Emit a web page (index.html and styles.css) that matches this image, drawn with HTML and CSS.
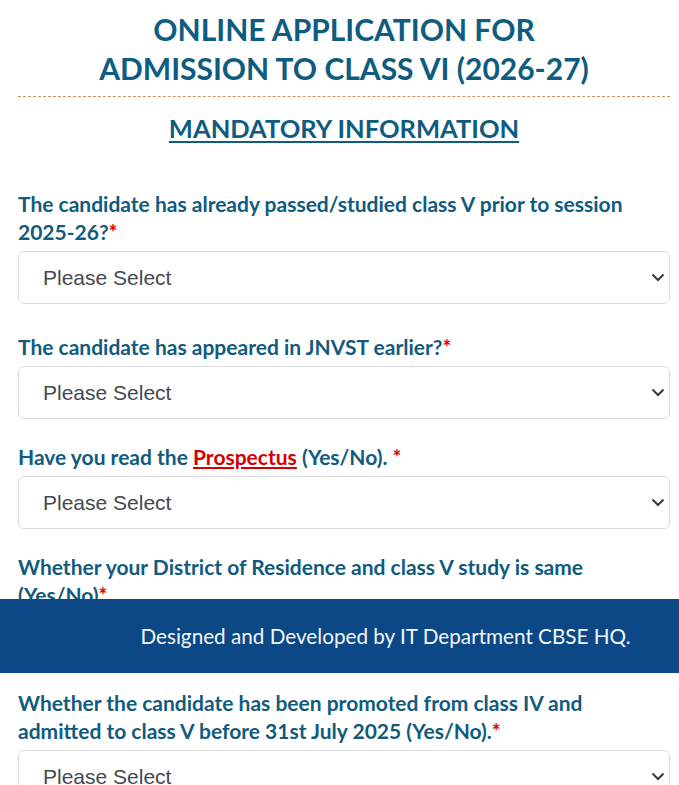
FILE: index.html
```html
<!DOCTYPE html>
<html lang="en">
<head>
<meta charset="utf-8">
<title>Online Application for Admission to Class VI (2026-27)</title>
<link rel="stylesheet" href="styles.css">
</head>
<body>
<div class="page">
  <h1 class="title">ONLINE APPLICATION FOR<br>ADMISSION TO CLASS VI (2026-27)</h1>
  <hr class="rule">
  <h2 class="subtitle">MANDATORY INFORMATION</h2>

  <form class="form">
    <div class="field field-first">
      <label class="label">The candidate has already passed/studied class V prior to session <span class="nw">2025-26?<span class="req">*</span></span></label>
      <div class="select-wrap">
        <select class="select"><option>Please Select</option><option>Yes</option><option>No</option></select>
        <svg class="chev" width="14" height="9" viewBox="0 0 14 9"><path d="M1.5 1.5 L7 7 L12.5 1.5" fill="none" stroke="#3a3a3a" stroke-width="2"/></svg>
      </div>
    </div>

    <div class="field">
      <label class="label">The candidate has appeared in JNVST earlier?<span class="req">*</span></label>
      <div class="select-wrap">
        <select class="select"><option>Please Select</option><option>Yes</option><option>No</option></select>
        <svg class="chev" width="14" height="9" viewBox="0 0 14 9"><path d="M1.5 1.5 L7 7 L12.5 1.5" fill="none" stroke="#3a3a3a" stroke-width="2"/></svg>
      </div>
    </div>

    <div class="field">
      <label class="label">Have you read the <a class="link" href="#">Prospectus</a> <span class="nw">(Yes/No).</span> <span class="req">*</span></label>
      <div class="select-wrap">
        <select class="select"><option>Please Select</option><option>Yes</option><option>No</option></select>
        <svg class="chev" width="14" height="9" viewBox="0 0 14 9"><path d="M1.5 1.5 L7 7 L12.5 1.5" fill="none" stroke="#3a3a3a" stroke-width="2"/></svg>
      </div>
    </div>

    <div class="field field-tight">
      <label class="label">Whether your District of Residence and class V study is same <span class="nw">(Yes/No)<span class="req">*</span></span></label>
      <div class="select-wrap">
        <select class="select"><option>Please Select</option><option>Yes</option><option>No</option></select>
        <svg class="chev" width="14" height="9" viewBox="0 0 14 9"><path d="M1.5 1.5 L7 7 L12.5 1.5" fill="none" stroke="#3a3a3a" stroke-width="2"/></svg>
      </div>
    </div>

    <div class="field">
      <label class="label">Whether the candidate has been promoted from class IV and admitted to class V before 31st July 2025 <span class="nw">(Yes/No).<span class="req">*</span></span></label>
      <div class="select-wrap">
        <select class="select"><option>Please Select</option><option>Yes</option><option>No</option></select>
        <svg class="chev" width="14" height="9" viewBox="0 0 14 9"><path d="M1.5 1.5 L7 7 L12.5 1.5" fill="none" stroke="#3a3a3a" stroke-width="2"/></svg>
      </div>
    </div>
  </form>
</div>

<footer class="footer">
  <p class="footer-text">Designed and Developed by IT Department CBSE HQ.</p>
</footer>
</body>
</html>
```

FILE: styles.css
```css
html, body {
  margin: 0;
  padding: 0;
  background: #ffffff;
}

body {
  font-family: Lato, "Noto Sans", sans-serif;
  color: #105b7e;
}

.page {
  padding: 0 9px 0 18px;
}

.title {
  margin: 10px 0 8px;
  font-size: 30px;
  line-height: 39px;
  font-weight: 700;
  text-align: center;
  color: #0e5c80;
}

.rule {
  margin: 0;
  border: 0;
  border-top: 1px dashed #c8925a;
  height: 0;
}

.subtitle {
  margin: 14px 0 0;
  font-size: 25.5px;
  line-height: 34px;
  font-weight: 700;
  text-align: center;
  color: #0e5c80;
  text-decoration: underline;
  text-decoration-thickness: 2px;
  text-underline-offset: 3px;
}

.form {
  margin-top: 45px;
  display: flex;
  flex-direction: column;
}

.field {
  display: flex;
  flex-direction: column;
  gap: 5px;
  margin-bottom: 24px;
}

.field-first {
  margin-bottom: 29px;
}

.field-tight {
  margin-bottom: 22px;
}

.label {
  font-size: 21px;
  line-height: 28px;
  font-weight: 700;
  color: #105b7e;
}

.nw {
  white-space: nowrap;
}

.req {
  color: #e00000;
}

.link {
  color: #d40000;
  text-decoration: underline;
}

.select-wrap {
  position: relative;
}

.select {
  display: block;
  width: 100%;
  height: 53px;
  box-sizing: border-box;
  margin: 0;
  padding: 0 40px 0 24px;
  border: 1px solid #dcdcdc;
  border-radius: 6px;
  background: #ffffff;
  font-family: "Liberation Sans", Arial, sans-serif;
  font-size: 21px;
  color: #444a50;
  -webkit-appearance: none;
  appearance: none;
  outline: none;
}

.chev {
  position: absolute;
  right: 5px;
  top: 22px;
  pointer-events: none;
}

.footer {
  position: fixed;
  left: 0;
  right: 0;
  top: 599px;
  height: 74px;
  background: #0c4886;
  display: flex;
  align-items: center;
  justify-content: center;
  padding-left: 92px;
  box-sizing: border-box;
}

.footer-text {
  margin: 0;
  font-family: Lato, "Noto Sans", sans-serif;
  font-size: 20.7px;
  line-height: 28px;
  font-weight: 400;
  color: #f2f6fb;
}
```
